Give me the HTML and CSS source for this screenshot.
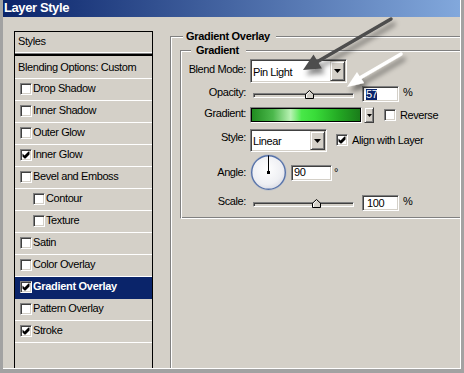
FILE: index.html
```html
<!DOCTYPE html>
<html>
<head>
<meta charset="utf-8">
<title>Layer Style</title>
<link rel="stylesheet" href="styles.css">
</head>
<body>
<div class="window">
  <div class="frame">
    <div class="inner-frame">
      <div class="titlebar">Layer Style</div>
      <div class="body">
        <div class="list">
          <div class="row head">Styles</div>
          <div class="sep"></div>
          <div class="row blend">Blending Options: Custom</div>
          <div class="row"><span class="cb"></span>Drop Shadow</div>
          <div class="row"><span class="cb"></span>Inner Shadow</div>
          <div class="row"><span class="cb"></span>Outer Glow</div>
          <div class="row"><span class="cb"><svg class="chk" width="8" height="8" viewBox="0 0 8 8"><polygon points="0.5,2.5 2.5,4.5 6.5,0.5 7.5,0.5 7.5,3.5 3.5,7.5 2.5,7.5 0.5,5.5"/></svg></span>Inner Glow</div>
          <div class="row"><span class="cb"></span>Bevel and Emboss</div>
          <div class="row sub"><span class="cb"></span>Contour</div>
          <div class="row sub"><span class="cb"></span>Texture</div>
          <div class="row"><span class="cb"></span>Satin</div>
          <div class="row"><span class="cb"></span>Color Overlay</div>
          <div class="row sel"><span class="cb"><svg class="chk" width="8" height="8" viewBox="0 0 8 8"><polygon points="0.5,2.5 2.5,4.5 6.5,0.5 7.5,0.5 7.5,3.5 3.5,7.5 2.5,7.5 0.5,5.5"/></svg></span>Gradient Overlay</div>
          <div class="row"><span class="cb"></span>Pattern Overlay</div>
          <div class="row"><span class="cb"><svg class="chk" width="8" height="8" viewBox="0 0 8 8"><polygon points="0.5,2.5 2.5,4.5 6.5,0.5 7.5,0.5 7.5,3.5 3.5,7.5 2.5,7.5 0.5,5.5"/></svg></span>Stroke</div>
        </div>

        <fieldset class="grp outer">
          <legend>Gradient Overlay</legend>
          <fieldset class="grp inner">
            <legend>Gradient</legend>

            <div class="frow r1">
              <span class="lab up3">Blend Mode:</span>
              <div class="select blend-sel">
                <span class="sel-text pt3">Pin Light</span>
                <span class="dd"><svg width="7" height="4" viewBox="0 0 7 4"><polygon points="0,0 7,0 3.5,4"/></svg></span>
              </div>
            </div>

            <div class="frow r2">
              <span class="lab up3">Opacity:</span>
              <div class="slider">
                <div class="track"></div>
                <svg class="thumb" style="--v:0.57" width="9" height="9" viewBox="0 0 9 9"><polygon points="0.5,8.5 0.5,4.2 4.5,0.5 8.5,4.2 8.5,8.5" fill="#d4d0c8" stroke="#000"/><polyline points="1.5,8 1.5,4.6 4.5,1.9" fill="none" stroke="#fff"/></svg>
              </div>
              <div class="inp op-inp"><span class="hl">57</span></div>
              <span class="unit">%</span>
            </div>

            <div class="frow r3">
              <span class="lab up3">Gradient:</span>
              <div class="swatch"></div>
              <span class="gbtn"><svg width="5" height="3" viewBox="0 0 5 3"><polygon points="0,0 5,0 2.5,3"/></svg></span>
              <span class="cb form-cb rev-cb"></span>
              <span class="cb-label">Reverse</span>
            </div>

            <div class="frow r4">
              <span class="lab up7">Style:</span>
              <div class="select style-sel">
                <span class="sel-text pt2">Linear</span>
                <span class="dd"><svg width="7" height="4" viewBox="0 0 7 4"><polygon points="0,0 7,0 3.5,4"/></svg></span>
              </div>
              <span class="cb form-cb align-cb"><svg class="chk" width="8" height="8" viewBox="0 0 8 8"><polygon points="0.5,2.5 2.5,4.5 6.5,0.5 7.5,0.5 7.5,3.5 3.5,7.5 2.5,7.5 0.5,5.5"/></svg></span>
              <span class="cb-label">Align with Layer</span>
            </div>

            <div class="frow r5">
              <span class="lab up1">Angle:</span>
              <svg class="dial" width="37" height="37" viewBox="0 0 37 37">
                <defs>
                  <radialGradient id="dialfill" cx="45%" cy="40%" r="65%">
                    <stop offset="0" stop-color="#ffffff"/>
                    <stop offset="0.7" stop-color="#eeeff3"/>
                    <stop offset="1" stop-color="#d6d8e2"/>
                  </radialGradient>
                </defs>
                <circle cx="18.5" cy="18.5" r="17.8" fill="none" stroke="#b9bfcc" stroke-width="0.8"/>
                <circle cx="18.5" cy="18.5" r="16.8" fill="url(#dialfill)" stroke="#5672a9" stroke-width="1.4"/>
                <line x1="18.5" y1="18.5" x2="18.5" y2="1.5" stroke="#000" stroke-width="1"/>
                <rect x="17" y="17" width="3" height="3" fill="#000"/>
              </svg>
              <div class="inp ang-inp">90</div>
              <span class="deg">°</span>
            </div>

            <div class="frow r6">
              <span class="lab up4">Scale:</span>
              <div class="slider">
                <div class="track"></div>
                <svg class="thumb" style="--v:0.64" width="9" height="9" viewBox="0 0 9 9"><polygon points="0.5,8.5 0.5,4.2 4.5,0.5 8.5,4.2 8.5,8.5" fill="#d4d0c8" stroke="#000"/><polyline points="1.5,8 1.5,4.6 4.5,1.9" fill="none" stroke="#fff"/></svg>
              </div>
              <div class="inp sc-inp">100</div>
              <span class="unit">%</span>
            </div>
          </fieldset>
        </fieldset>
      </div>
    </div>
  </div>

  <svg class="arrows" width="464" height="373" viewBox="0 0 464 373">
    <defs>
      <filter id="shadow" x="-30%" y="-30%" width="160%" height="160%">
        <feDropShadow dx="3" dy="5" stdDeviation="2.5" flood-color="#000" flood-opacity="0.45"/>
      </filter>
    </defs>
    <g filter="url(#shadow)">
      <line x1="391" y1="19" x2="316" y2="62.5" stroke="#4d4d4d" stroke-width="3.5" stroke-linecap="round"/>
      <polygon points="303,70 313.5,54.5 322,68.5" fill="#4d4d4d"/>
    </g>
    <g filter="url(#shadow)">
      <line x1="401" y1="54" x2="358" y2="79" stroke="#ffffff" stroke-width="3.5" stroke-linecap="round"/>
      <polygon points="347,87 357,72 364,83" fill="#ffffff"/>
    </g>
  </svg>
</div>
</body>
</html>
```

FILE: styles.css
```css
* { box-sizing: border-box; }

html, body {
  margin: 0;
  padding: 0;
  background: #d4d0c8;
}

body {
  font-family: "Liberation Sans", Arial, sans-serif;
  font-size: 11px;
  letter-spacing: -0.4px;
  color: #000;
}

.window {
  position: relative;
  width: 464px;
  height: 373px;
  overflow: hidden;
}

.frame {
  height: 373px;
  border-left: 3px solid #a2a2a2;
  border-right: 3px solid #a2a2a2;
  border-bottom: 4px solid #a2a2a2;
  background: #d4d0c8;
}

.inner-frame {
  height: 100%;
  border-right: 1px solid #fff;
  border-bottom: 1px solid #fff;
  overflow: hidden;
}

.titlebar {
  height: 17px;
  padding: 0 0 2px 1px;
  background: linear-gradient(to right, #0a246a, #82a8dc);
  color: #fff;
  font-weight: bold;
  font-size: 13px;
  line-height: 15px;
  white-space: nowrap;
}

.body {
  display: flex;
  align-items: flex-start;
}

/* ---------- left style list ---------- */
.list {
  flex: none;
  width: 139px;
  height: 400px;
  margin: 14px 0 0 11px;
  border: 1px solid #000;
  background: #d4d0c8;
}

.row {
  height: 22px;
  padding: 0 0 2px 5px;
  border-bottom: 1px solid #fff;
  display: flex;
  align-items: center;
  line-height: 13px;
  white-space: nowrap;
}

.row.head {
  height: 20px;
  padding: 0 0 1px 3px;
  border-bottom: 0;
}

.row.blend {
  height: 23px;
  padding: 0 0 0 3px;
}

.row.sub {
  padding-left: 18px;
}

.row.sel {
  background: #0a246a;
  border-bottom-color: #0a246a;
  color: #fff;
  font-weight: bold;
  letter-spacing: -0.3px;
}

.sep {
  height: 4px;
  border-top: 1px solid #fff;
  border-bottom: 2px solid #000;
  background: #808080;
}

/* ---------- checkbox ---------- */
.cb {
  flex: none;
  width: 12px;
  height: 12px;
  margin: 1px 1px 0 0;
  background: #fff;
  border: 1px solid;
  border-color: #808080 #fff #fff #808080;
  box-shadow: inset 1px 1px #404040, inset -1px -1px #d4d0c8;
  display: flex;
  align-items: center;
  justify-content: center;
}

.chk polygon { fill: #000; }

.form-cb {
  margin: 0 4px 0 0;
}

.rev-cb { margin-left: 10px; }
.align-cb { margin-left: 9px; margin-top: -2px; }

.cb-label {
  white-space: nowrap;
  line-height: 13px;
}

/* ---------- group boxes ---------- */
.grp {
  margin: 0;
  padding: 0;
  min-width: 0;
  border: 1px solid;
}

.grp > legend {
  padding: 0;
  height: 13px;
  line-height: 13px;
  font-weight: bold;
  letter-spacing: -0.3px;
  background: #d4d0c8;
  white-space: nowrap;
}

.outer {
  flex: none;
  width: 330px;
  height: 360px;
  margin: 13px 0 0 17px;
  border-color: #808080;
  box-shadow: inset 1px 1px #fff;
}

.outer > legend {
  margin-left: 12px;
  padding: 0 6px 0 3px;
}

.inner {
  width: 300px;
  margin: 1px 0 0 9px;
  padding: 2px 0 7px 0;
  border-color: #808080 #808080 #fff #808080;
  box-shadow: inset 1px 1px #fff, inset 0 -1px #808080;
}

.inner > legend {
  margin-left: 10px;
  padding: 0 7px 0 5px;
}

/* ---------- form rows ---------- */
.frow {
  display: flex;
  align-items: center;
  white-space: nowrap;
}

.r1 { height: 24px; }
.r2 { height: 16px; margin-top: 3px; }
.r3 { height: 16px; margin-top: 5px; }
.r4 { height: 23px; margin-top: 6px; }
.r5 { height: 37px; margin-top: 2px; }
.r6 { height: 16px; margin-top: 4px; }

.lab {
  flex: none;
  width: 65px;
  margin-right: 4px;
  text-align: right;
  line-height: 13px;
}

.up1 { margin-bottom: 1px; }
.up3 { margin-bottom: 3px; }
.up4 { margin-bottom: 4px; }
.up7 { margin-bottom: 7px; }

/* select / combobox */
.select {
  flex: none;
  align-self: stretch;
  display: flex;
  padding: 1px;
  background: #fff;
  border: 1px solid;
  border-color: #808080 #fff #fff #808080;
  box-shadow: inset 1px 1px #404040, inset -1px -1px #d4d0c8;
}

.blend-sel { width: 97px; }
.style-sel { width: 77px; }

.sel-text {
  flex: 1;
  display: flex;
  align-items: center;
  line-height: 13px;
  padding-left: 1px;
}

.pt3 { padding-top: 3px; }
.pt2 { padding-top: 2px; }

.dd {
  flex: none;
  width: 15px;
  background: #d4d0c8;
  border: 1px solid;
  border-color: #d4d0c8 #404040 #404040 #d4d0c8;
  box-shadow: inset 1px 1px #fff, inset -1px -1px #808080;
  display: flex;
  align-items: center;
  justify-content: center;
}

.dd svg, .gbtn svg { display: block; fill: #000; }

/* slider */
.slider {
  position: relative;
  flex: none;
  align-self: stretch;
  width: 101px;
  margin-left: 3px;
  padding-top: 7px;
}

.track {
  height: 5px;
  background: #d4d0c8;
  border: 1px solid;
  border-color: #808080 #fff #fff #808080;
  box-shadow: inset 1px 1px #404040;
}

.thumb {
  position: absolute;
  top: 4px;
  left: calc(var(--v) * 92px);
  display: block;
}

/* text inputs */
.inp {
  flex: none;
  height: 16px;
  display: flex;
  align-items: center;
  line-height: 13px;
  background: #fff;
  border: 1px solid;
  border-color: #808080 #fff #fff #808080;
  box-shadow: inset 1px 1px #404040, inset -1px -1px #d4d0c8;
}

.op-inp { width: 37px; margin-left: 8px; padding-left: 3px; }
.sc-inp { width: 37px; margin-left: 8px; padding-left: 4px; }
.ang-inp { width: 41px; margin-left: 4px; padding-left: 2px; }

.hl {
  display: inline-block;
  height: 11px;
  line-height: 11px;
  background: #0a246a;
  color: #fff;
}

.unit {
  margin: 0 0 3px 4px;
  line-height: 13px;
}

.deg {
  margin: 0 0 1px 2px;
  line-height: 13px;
}

/* gradient swatch */
.swatch {
  flex: none;
  width: 112px;
  height: 16px;
  border: 1px solid;
  border-color: #808080 #fff #fff #808080;
  box-shadow: inset 0 0 0 1px #000;
  background: linear-gradient(to right, #1e8a1e 0%, #4cb84c 20%, #b9f2b4 36%, #48e848 46%, #39dc39 58%, #23a823 80%, #1a7a1a 100%);
}

.gbtn {
  flex: none;
  width: 10px;
  height: 16px;
  margin-left: 2px;
  background: #d4d0c8;
  border: 1px solid;
  border-color: #d4d0c8 #404040 #404040 #d4d0c8;
  box-shadow: inset 1px 1px #fff, inset -1px -1px #808080;
  display: flex;
  align-items: center;
  justify-content: center;
}

/* angle dial */
.dial {
  flex: none;
  display: block;
}

/* annotation arrows overlay */
.arrows {
  position: absolute;
  left: 0;
  top: 0;
  pointer-events: none;
}
```
